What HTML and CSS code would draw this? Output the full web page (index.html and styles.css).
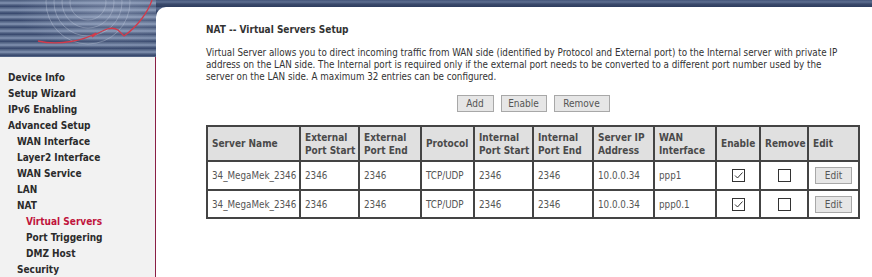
FILE: index.html
```html
<!DOCTYPE html>
<html>
<head>
<meta charset="utf-8">
<link rel="stylesheet" href="styles.css">
</head>
<body>
<div class="page">
  <div class="left">
    <div class="logo">
      <svg width="156" height="57" viewBox="0 0 156 57">
        <g fill="none" stroke="#c9d2e2" stroke-opacity="0.35" stroke-width="1">
          <circle cx="88" cy="2" r="18"/>
          <circle cx="88" cy="2" r="26"/>
          <circle cx="88" cy="2" r="34"/>
          <circle cx="88" cy="2" r="42"/>
        </g>
        <path d="M38 41 C60 46 85 40 96 33 L92 37 C104 29 112 26 118 30 L124 36 C138 26 148 12 152 0" fill="none" stroke="#d23a4a" stroke-width="1.3"/>
      </svg>
    </div>
    <nav class="menu">
      <a class="m0">Device Info</a>
      <a class="m0">Setup Wizard</a>
      <a class="m0">IPv6 Enabling</a>
      <a class="m0">Advanced Setup</a>
      <a class="m1">WAN Interface</a>
      <a class="m1">Layer2 Interface</a>
      <a class="m1">WAN Service</a>
      <a class="m1">LAN</a>
      <a class="m1">NAT</a>
      <a class="m2 active">Virtual Servers</a>
      <a class="m2">Port Triggering</a>
      <a class="m2">DMZ Host</a>
      <a class="m1">Security</a>
    </nav>
  </div>
  <div class="main">
    <div class="panel">
      <h1 class="title">NAT -- Virtual Servers Setup</h1>
      <p class="desc">Virtual Server allows you to direct incoming traffic from WAN side (identified by Protocol and External port) to the Internal server with private IP<br>address on the LAN side. The Internal port is required only if the external port needs to be converted to a different port number used by the<br>server on the LAN side. A maximum 32 entries can be configured.</p>
      <div class="actions">
        <button class="btn b-add">Add</button>
        <button class="btn b-enable">Enable</button>
        <button class="btn b-remove">Remove</button>
      </div>
      <table class="grid">
        <colgroup>
          <col style="width:93px"><col style="width:59px"><col style="width:62px"><col style="width:53px"><col style="width:59px"><col style="width:60px"><col style="width:61px"><col style="width:62px"><col style="width:44px"><col style="width:48px"><col style="width:51px">
        </colgroup>
        <tr class="head">
          <td>Server Name</td><td>External<br>Port Start</td><td>External<br>Port End</td><td>Protocol</td><td>Internal<br>Port Start</td><td>Internal<br>Port End</td><td>Server IP<br>Address</td><td>WAN<br>Interface</td><td>Enable</td><td>Remove</td><td>Edit</td>
        </tr>
        <tr class="row">
          <td>34_MegaMek_2346</td><td>2346</td><td>2346</td><td>TCP/UDP</td><td>2346</td><td>2346</td><td>10.0.0.34</td><td>ppp1</td>
          <td class="c"><span class="cb"><svg width="11" height="11" viewBox="0 0 11 11"><path d="M2 5.5 L4.5 8 L9.5 2.5" fill="none" stroke="#333" stroke-width="1"/></svg></span></td>
          <td class="c"><span class="cb"></span></td>
          <td class="c"><button class="edit">Edit</button></td>
        </tr>
        <tr class="row">
          <td>34_MegaMek_2346</td><td>2346</td><td>2346</td><td>TCP/UDP</td><td>2346</td><td>2346</td><td>10.0.0.34</td><td>ppp0.1</td>
          <td class="c"><span class="cb"><svg width="11" height="11" viewBox="0 0 11 11"><path d="M2 5.5 L4.5 8 L9.5 2.5" fill="none" stroke="#333" stroke-width="1"/></svg></span></td>
          <td class="c"><span class="cb"></span></td>
          <td class="c"><button class="edit">Edit</button></td>
        </tr>
      </table>
    </div>
  </div>
</div>
</body>
</html>
```
FILE: styles.css
```css
html, body {
  margin: 0;
  padding: 0;
  background: #fff;
}
body {
  font-family: "DejaVu Sans Condensed", "DejaVu Sans", sans-serif;
  font-stretch: condensed;
  font-size: 9.75px;
  color: #333;
}
.page {
  display: flex;
  height: 277px;
  overflow: hidden;
}
.left {
  width: 156px;
  display: flex;
  flex-direction: column;
  flex: none;
}
.logo {
  height: 57px;
  background:
    radial-gradient(ellipse at 70% 20%, rgba(200,210,230,0.35), rgba(200,210,230,0) 60%),
    repeating-linear-gradient(180deg, #4a5b7c 0px, #6a7b9b 2px, #8595b3 3px, #4d5e80 5px, #34446a 7px);
}
.logo svg { display: block; }
.menu {
  flex: 1;
  background: #f2f2f2;
  border-right: 1px solid #8a1f45;
  display: flex;
  flex-direction: column;
  padding-top: 13px;
}
.menu a {
  display: block;
  height: 16px;
  line-height: 16px;
  font-size: 10px;
  font-weight: bold;
  color: #2b2b2b;
  white-space: nowrap;
}
.menu .m0 { padding-left: 8px; }
.menu .m1 { padding-left: 17px; }
.menu .m2 { padding-left: 26px; }
.menu .active { color: #c0143c; }
.main {
  flex: 1;
  background: repeating-linear-gradient(180deg, #44557a 0px, #5d6e90 2px, #3a4a6c 4px, #2f3d5e 7px);
}
.panel {
  margin-top: 7px;
  height: 270px;
  background: #fff;
  border-top-left-radius: 10px;
  padding-left: 50px;
  box-sizing: border-box;
}
.title {
  margin: 0;
  padding-top: 17px;
  font-size: 10px;
  line-height: 12px;
  font-weight: bold;
  color: #333;
}
.desc {
  margin: 11px 0 0 0;
  line-height: 12px;
  white-space: nowrap;
  color: #333;
}
.actions {
  width: 654px;
  display: flex;
  justify-content: center;
  gap: 7px;
  margin-top: 12px;
}
.btn, .edit {
  font-family: inherit;
  font-size: 10px;
  color: #555;
  background: #e6e6e6;
  border: 1px solid #a8a8a8;
  height: 17px;
  padding: 0;
  line-height: 15px;
  text-align: center;
}
.b-add { width: 37px; }
.b-enable { width: 46px; }
.b-remove { width: 56px; }
.grid {
  margin-top: 13px;
  width: 654px;
  table-layout: fixed;
  border-collapse: separate;
  border-spacing: 0;
  border: 1px solid #444;
}
.grid td {
  border: 1px solid #444;
  padding: 0 4px;
  vertical-align: middle;
  white-space: nowrap;
  overflow: hidden;
  color: #555;
  font-size: 9.75px;
  line-height: 13px;
}
.grid .head td {
  height: 33px;
  background: #e0e0e0;
  font-weight: bold;
  font-size: 10px;
  color: #4a4a4a;
}
.grid .row td {
  height: 27px;
}
.grid .row:last-child td { height: 26px; }
.grid td.c { text-align: center; padding: 0; }
.cb {
  display: inline-block;
  width: 11px;
  height: 11px;
  border: 1px solid #333;
  background: #fff;
  vertical-align: middle;
}
.cb svg { display: block; }
.edit {
  width: 37px;
  height: 17px;
}
```
